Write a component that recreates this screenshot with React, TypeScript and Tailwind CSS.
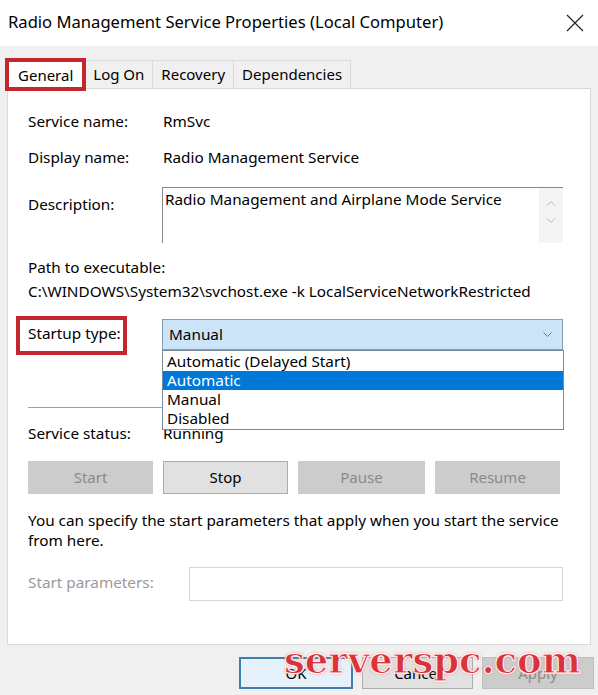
const font = { fontFamily: '"Noto Sans", "Open Sans", sans-serif' };

function Tab({ label, active }: { label: string; active?: boolean }) {
  if (active) {
    return (
      <div className="relative h-[30px] -mb-[2px] px-[11px] flex items-center bg-white border border-b-0 border-[#d9d9d9] text-[15px] text-black">
        {label}
        <div className="absolute -left-[2px] -right-[2px] -top-[3px] -bottom-[1px] border-[4px] border-[#c1272d]" />
      </div>
    );
  }
  return (
    <div className="h-[28px] px-[8px] flex items-center bg-[#f0f0f0] border border-b-0 border-l-0 border-[#d9d9d9] text-[15px] text-black">
      {label}
    </div>
  );
}

function Btn({ label, disabled, w }: { label: string; disabled?: boolean; w: string }) {
  return (
    <div
      className={`${w} h-[33px] flex items-center justify-center text-[15px] border ${
        disabled ? "bg-[#cccccc] border-[#cccccc] text-[#8a8a8a]" : "bg-[#e1e1e1] border-[#adadad] text-black"
      }`}
    >
      {label}
    </div>
  );
}

export default function App() {
  return (
    <div className="relative w-[598px] h-[695px] bg-[#f0f0f0] overflow-hidden" style={font}>
      {/* title bar */}
      <div className="h-[46px] bg-white flex items-center justify-between pl-[8px] pr-[12px]">
        <span className="text-[16.6px] text-black -mt-[2px]">Radio Management Service Properties (Local Computer)</span>
        <svg width="18" height="18" viewBox="0 0 18 18" className="mr-[2px]">
          <path d="M1 1L17 17M17 1L1 17" stroke="#222" strokeWidth="1.2" />
        </svg>
      </div>

      {/* tabs */}
      <div className="flex items-end pl-[6px] mt-[12px] h-[30px]">
        <Tab label="General" active />
        <Tab label="Log On" />
        <Tab label="Recovery" />
        <Tab label="Dependencies" />
      </div>

      {/* panel */}
      <div className="ml-[7px] w-[584px] h-[557px] bg-white border border-[#d9d9d9] text-[15.3px] text-black px-[20px] pt-[22px]">
        <div className="flex h-[20px] items-center">
          <span className="w-[135px]">Service name:</span>
          <span>RmSvc</span>
        </div>
        <div className="flex h-[20px] items-center mt-[16px]">
          <span className="w-[135px]">Display name:</span>
          <span>Radio Management Service</span>
        </div>
        <div className="flex mt-[20px]">
          <span className="w-[134px] mt-[6px]">Description:</span>
          <div className="flex w-[401px] h-[56px] border-t border-l border-[#828790]">
            <div className="flex-1 pl-[2px] leading-[22px]">Radio Management and Airplane Mode Service</div>
            <div className="w-[24px] bg-[#f4f4f4] flex flex-col items-center pt-[12px] gap-[12px]">
              <svg width="10" height="6" viewBox="0 0 10 6"><path d="M1 5.5L5 1.5L9 5.5" stroke="#b8b8b8" fill="none" /></svg>
              <svg width="10" height="6" viewBox="0 0 10 6"><path d="M1 0.5L5 4.5L9 0.5" stroke="#b8b8b8" fill="none" /></svg>
            </div>
          </div>
        </div>
        <div className="h-[20px] flex items-center mt-[14px]">Path to executable:</div>
        <div className="h-[20px] flex items-center mt-[4px]">C:\WINDOWS\System32\svchost.exe -k LocalServiceNetworkRestricted</div>

        <div className="flex mt-[18px] items-center">
          <div className="relative w-[134px] h-[31px] flex items-center -mt-[3px]">
            Startup type:
            <div className="absolute left-[-12px] w-[111px] -top-[2px] h-[39px] border-[4px] border-[#c1272d]" />
          </div>
          <div className="relative w-[401px] h-[31px] bg-[#cce4f7] border border-[#7f9db9] flex items-center justify-between pl-[6px] pr-[10px]">
            <span className="-mt-[1px]">Manual</span>
            <svg width="9" height="6" viewBox="0 0 9 6"><path d="M0.5 0.5L4.5 4.5L8.5 0.5" stroke="#6d7b8a" fill="none" /></svg>
            {/* open list */}
            <div className="absolute left-[-1px] top-[30px] w-[402px] bg-white border border-[#7a8a9c] z-10 py-[1px] leading-[19px]">
              <div className="h-[19px] pl-[4px]">Automatic (Delayed Start)</div>
              <div className="h-[19px] pl-[4px] bg-[#0078d7] text-white">Automatic</div>
              <div className="h-[19px] pl-[4px]">Manual</div>
              <div className="h-[19px] pl-[4px]">Disabled</div>
            </div>
          </div>
        </div>

        <div className="mt-[57px] h-px bg-[#a0a0a0] w-[535px]" />

        <div className="flex h-[20px] items-center mt-[15px]">
          <span className="w-[135px]">Service status:</span>
          <span>Running</span>
        </div>

        <div className="flex gap-[10px] mt-[18px]">
          <Btn label="Start" disabled w="w-[125px]" />
          <Btn label="Stop" w="w-[125px]" />
          <Btn label="Pause" disabled w="w-[127px]" />
          <Btn label="Resume" disabled w="w-[125px]" />
        </div>

        <p className="mt-[16px] leading-[20px] w-[540px]">
          You can specify the start parameters that apply when you start the service from here.
        </p>

        <div className="flex items-center mt-[17px]">
          <span className="w-[161px] text-[#9a9a9a] -mt-[3px]">Start parameters:</span>
          <div className="w-[374px] h-[34px] border border-[#d6d6d6] bg-white" />
        </div>
      </div>

      {/* bottom buttons */}
      <div className="flex justify-end gap-[9px] pr-[4px] mt-[12px]">
        <div className="w-[114px] h-[32px] bg-[#e5f1fb] border-2 border-[#3c7fb1] flex items-center justify-center text-[15px]">OK</div>
        <div className="w-[111px] h-[32px] bg-[#e1e1e1] border border-[#adadad] flex items-center justify-center text-[15px]">Cancel</div>
        <div className="w-[112px] h-[32px] bg-[#cccccc] border border-[#bfbfbf] flex items-center justify-center text-[15px] text-[#8a8a8a]">Apply</div>
      </div>

      {/* watermark */}
      <div
        className="absolute left-[284px] top-[642px] text-[37px] font-bold leading-none text-[#d9343c] [text-shadow:0_0_1px_#fff,0_0_2px_#fff,0_0_3px_#e66]"
        style={{ fontFamily: '"DejaVu Serif", "Liberation Serif", serif', WebkitTextStroke: "0.8px #fff" }}
      >
        serverspc.com
      </div>
    </div>
  );
}
